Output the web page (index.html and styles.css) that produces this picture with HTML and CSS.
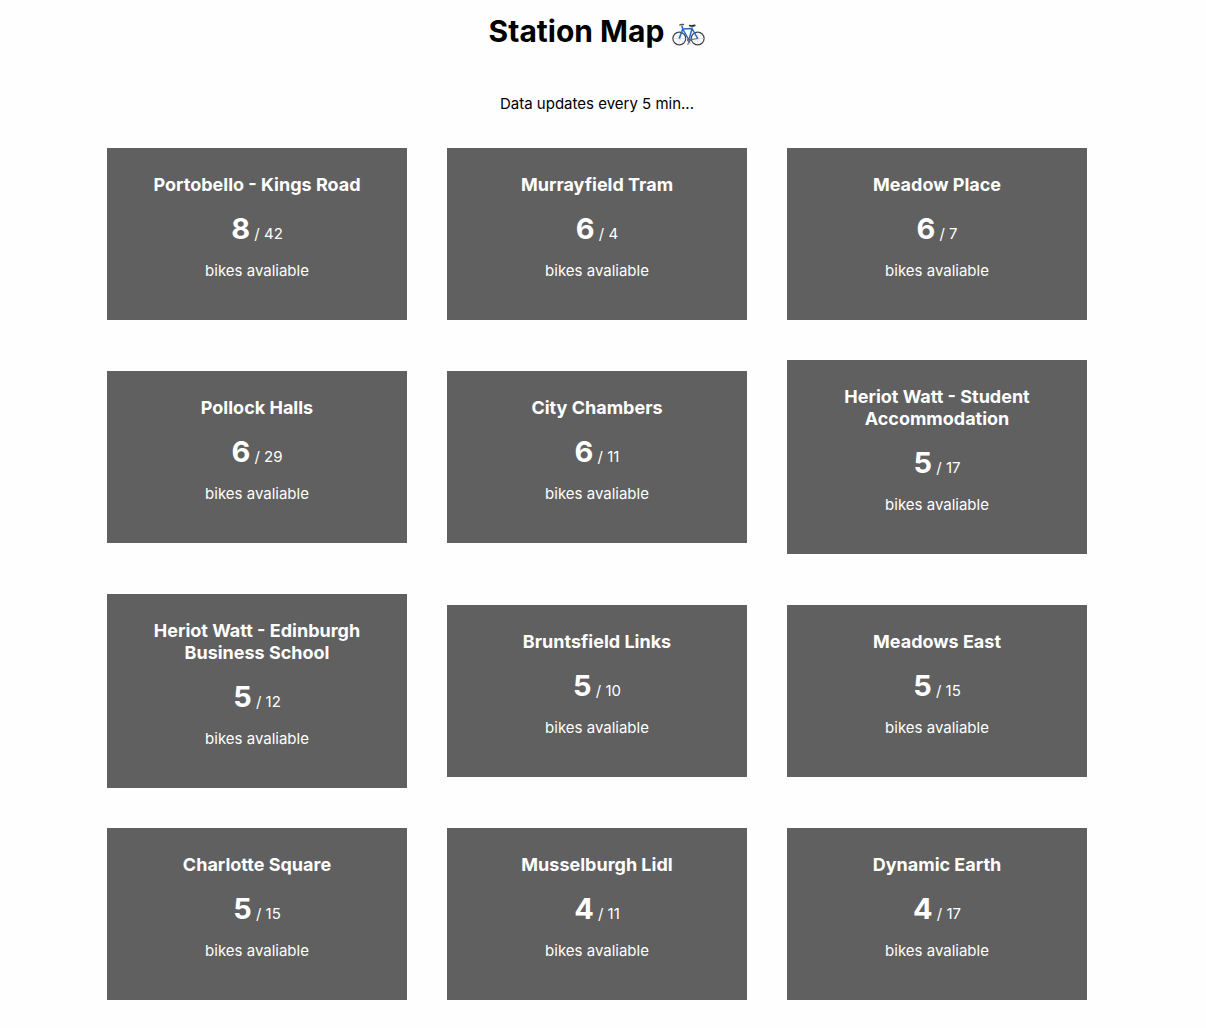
FILE: index.html
```html
<!DOCTYPE html>
<html lang="en">
<head>
<meta charset="utf-8">
<meta name="viewport" content="width=device-width, initial-scale=1">
<title>Station Map</title>
<link rel="stylesheet" href="styles.css">
</head>
<body>
<header class="header">
  <h1 class="title">Station Map
    <svg class="bike" viewBox="0 0 33 24" fill="none" role="img" aria-label="Bicycle">
      <g stroke="#3f4144" stroke-width="1.2"><circle cx="7.3" cy="15.500" r="6.400"/><circle cx="25.700" cy="15.500" r="6.400"/></g>
      <g stroke="#c9ccd0" stroke-width=".5"><path d="M1.500 15.500h12M7.300 9.500v12M3 11.300l8.600 8.400M3 19.700l8.600-8.400M19.700 15.500h12M25.700 9.500v12M21.400 11.300l8.600 8.400M21.400 19.700l8.600-8.400"/></g>
      <path d="M17 17l1 3.500M17 17l-1.200 5M17 17l8.700-1.500" stroke="#666b70" stroke-width="1"/>
      <path d="M7.300 15.500L10.700 6L17 17L20 5.500M10.700 6L20 5.500L25.700 15.500M10.700 6L9.800 2.500" stroke="#2468c8" stroke-width="1.500" stroke-linejoin="round"/>
      <path d="M7.800 2Q8.500 1.200 11.500 1.500" stroke="#555" stroke-width="1.300" stroke-linecap="round"/>
      <path d="M20 5.500l.5-2.500" stroke="#777" stroke-width="1"/>
      <path d="M17.800 2.600q2.500 .8 5-.200" stroke="#303235" stroke-width="1.700" stroke-linecap="round"/>
      <circle cx="17" cy="17" r="1.600" stroke="#666b70" stroke-width="1"/>
    </svg>
  </h1>
  <p class="note">Data updates every 5 min...</p>
</header>
<main class="stations">
  <article class="card"><h2 class="name">Portobello - Kings Road</h2><p class="count"><strong class="bikes">8</strong> / 42</p><p class="label">bikes avaliable</p></article>
  <article class="card"><h2 class="name">Murrayfield Tram</h2><p class="count"><strong class="bikes">6</strong> / 4</p><p class="label">bikes avaliable</p></article>
  <article class="card"><h2 class="name">Meadow Place</h2><p class="count"><strong class="bikes">6</strong> / 7</p><p class="label">bikes avaliable</p></article>
  <article class="card"><h2 class="name">Pollock Halls</h2><p class="count"><strong class="bikes">6</strong> / 29</p><p class="label">bikes avaliable</p></article>
  <article class="card"><h2 class="name">City Chambers</h2><p class="count"><strong class="bikes">6</strong> / 11</p><p class="label">bikes avaliable</p></article>
  <article class="card"><h2 class="name">Heriot Watt - Student Accommodation</h2><p class="count"><strong class="bikes">5</strong> / 17</p><p class="label">bikes avaliable</p></article>
  <article class="card"><h2 class="name">Heriot Watt - Edinburgh Business School</h2><p class="count"><strong class="bikes">5</strong> / 12</p><p class="label">bikes avaliable</p></article>
  <article class="card"><h2 class="name">Bruntsfield Links</h2><p class="count"><strong class="bikes">5</strong> / 10</p><p class="label">bikes avaliable</p></article>
  <article class="card"><h2 class="name">Meadows East</h2><p class="count"><strong class="bikes">5</strong> / 15</p><p class="label">bikes avaliable</p></article>
  <article class="card"><h2 class="name">Charlotte Square</h2><p class="count"><strong class="bikes">5</strong> / 15</p><p class="label">bikes avaliable</p></article>
  <article class="card"><h2 class="name">Musselburgh Lidl</h2><p class="count"><strong class="bikes">4</strong> / 11</p><p class="label">bikes avaliable</p></article>
  <article class="card"><h2 class="name">Dynamic Earth</h2><p class="count"><strong class="bikes">4</strong> / 17</p><p class="label">bikes avaliable</p></article>
</main>
</body>
</html>
```
FILE: styles.css
```css
* {
  box-sizing: border-box;
}

body {
  margin: 0;
  padding: 12px 12px 28px 0;
  background: #fefefe;
  color: #000;
  font-family: Inter, "Liberation Sans", sans-serif;
  font-size: 15px;
  line-height: 20px;
  text-align: center;
}

h1,
h2,
p {
  margin: 0;
}

.title {
  display: flex;
  justify-content: center;
  align-items: center;
  gap: 8px;
  font-size: 30px;
  font-weight: 700;
  line-height: 38px;
}

.bike {
  width: 33px;
  height: 24px;
  margin-top: 8px;
}

.note {
  margin: 44px 0 34px;
}

.stations {
  display: grid;
  grid-template-columns: repeat(auto-fit, 300px);
  justify-content: center;
  align-items: center;
  gap: 40px;
  max-width: 1060px;
  margin: 0 auto;
}

.card {
  padding: 26px 20px 39px;
  background: #606060;
  color: #fff;
}

.name {
  font-size: 18px;
  font-weight: 700;
  line-height: 22px;
}

.count {
  margin: 16px 0 15px;
}

.bikes {
  font-size: 29px;
  font-weight: 700;
  line-height: 34px;
}
```
